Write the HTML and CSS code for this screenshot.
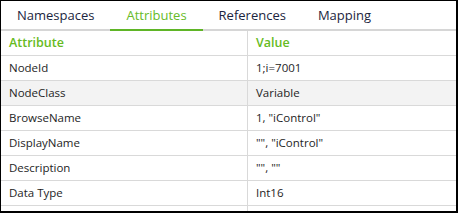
FILE: index.html
```html
<!DOCTYPE html>
<html>
<head>
<meta charset="utf-8">
<link rel="stylesheet" href="styles.css">
</head>
<body>
<div class="window">
  <nav class="tabs">
    <div class="tab">Namespaces</div>
    <div class="tab active">Attributes</div>
    <div class="tab">References</div>
    <div class="tab">Mapping</div>
  </nav>
  <div class="grid">
    <div class="row head"><div class="cell">Attribute</div><div class="cell">Value</div></div>
    <div class="row"><div class="cell">NodeId</div><div class="cell">1;i=7001</div></div>
    <div class="row alt"><div class="cell">NodeClass</div><div class="cell">Variable</div></div>
    <div class="row"><div class="cell">BrowseName</div><div class="cell">1, "iControl"</div></div>
    <div class="row"><div class="cell">DisplayName</div><div class="cell">"", "iControl"</div></div>
    <div class="row"><div class="cell">Description</div><div class="cell">"", ""</div></div>
    <div class="row"><div class="cell">Data Type</div><div class="cell">Int16</div></div>
    <div class="row"><div class="cell"></div><div class="cell"></div></div>
  </div>
</div>
</body>
</html>
```
FILE: styles.css
```css
html, body {
  margin: 0;
  padding: 0;
  background: #ffffff;
}
.window {
  box-sizing: border-box;
  width: 458px;
  height: 213px;
  border-left: 1px solid #000;
  border-top: 1px solid #000;
  border-right: 2px solid #000;
  border-bottom: 2px solid #000;
  overflow: hidden;
  font-family: "Open Sans", "Noto Sans", sans-serif;
  color: #1e1e1e;
}
.tabs {
  display: flex;
  height: 28px;
  border-bottom: 2px solid #d6d6d6;
}
.tab {
  padding: 0 16px;
  font-size: 13px;
  line-height: 28px;
  color: #1b2540;
  white-space: nowrap;
}
.tab.active {
  color: #67bb28;
  border-bottom: 2px solid #5fb526;
  margin-bottom: -2px;
}
.grid {
  display: flex;
  flex-direction: column;
}
.row {
  display: grid;
  grid-template-columns: 246px 1fr;
  height: 24px;
  border-bottom: 1px solid #d9d9d9;
  flex: none;
}
.row.alt {
  background: #f3f3f3;
}
.cell {
  padding-left: 8px;
  font-size: 11.5px;
  line-height: 24px;
  white-space: nowrap;
}
.cell + .cell {
  border-left: 1px solid #d9d9d9;
}
.head .cell {
  color: #66bb22;
  font-weight: 600;
  font-size: 12.5px;
}
```
